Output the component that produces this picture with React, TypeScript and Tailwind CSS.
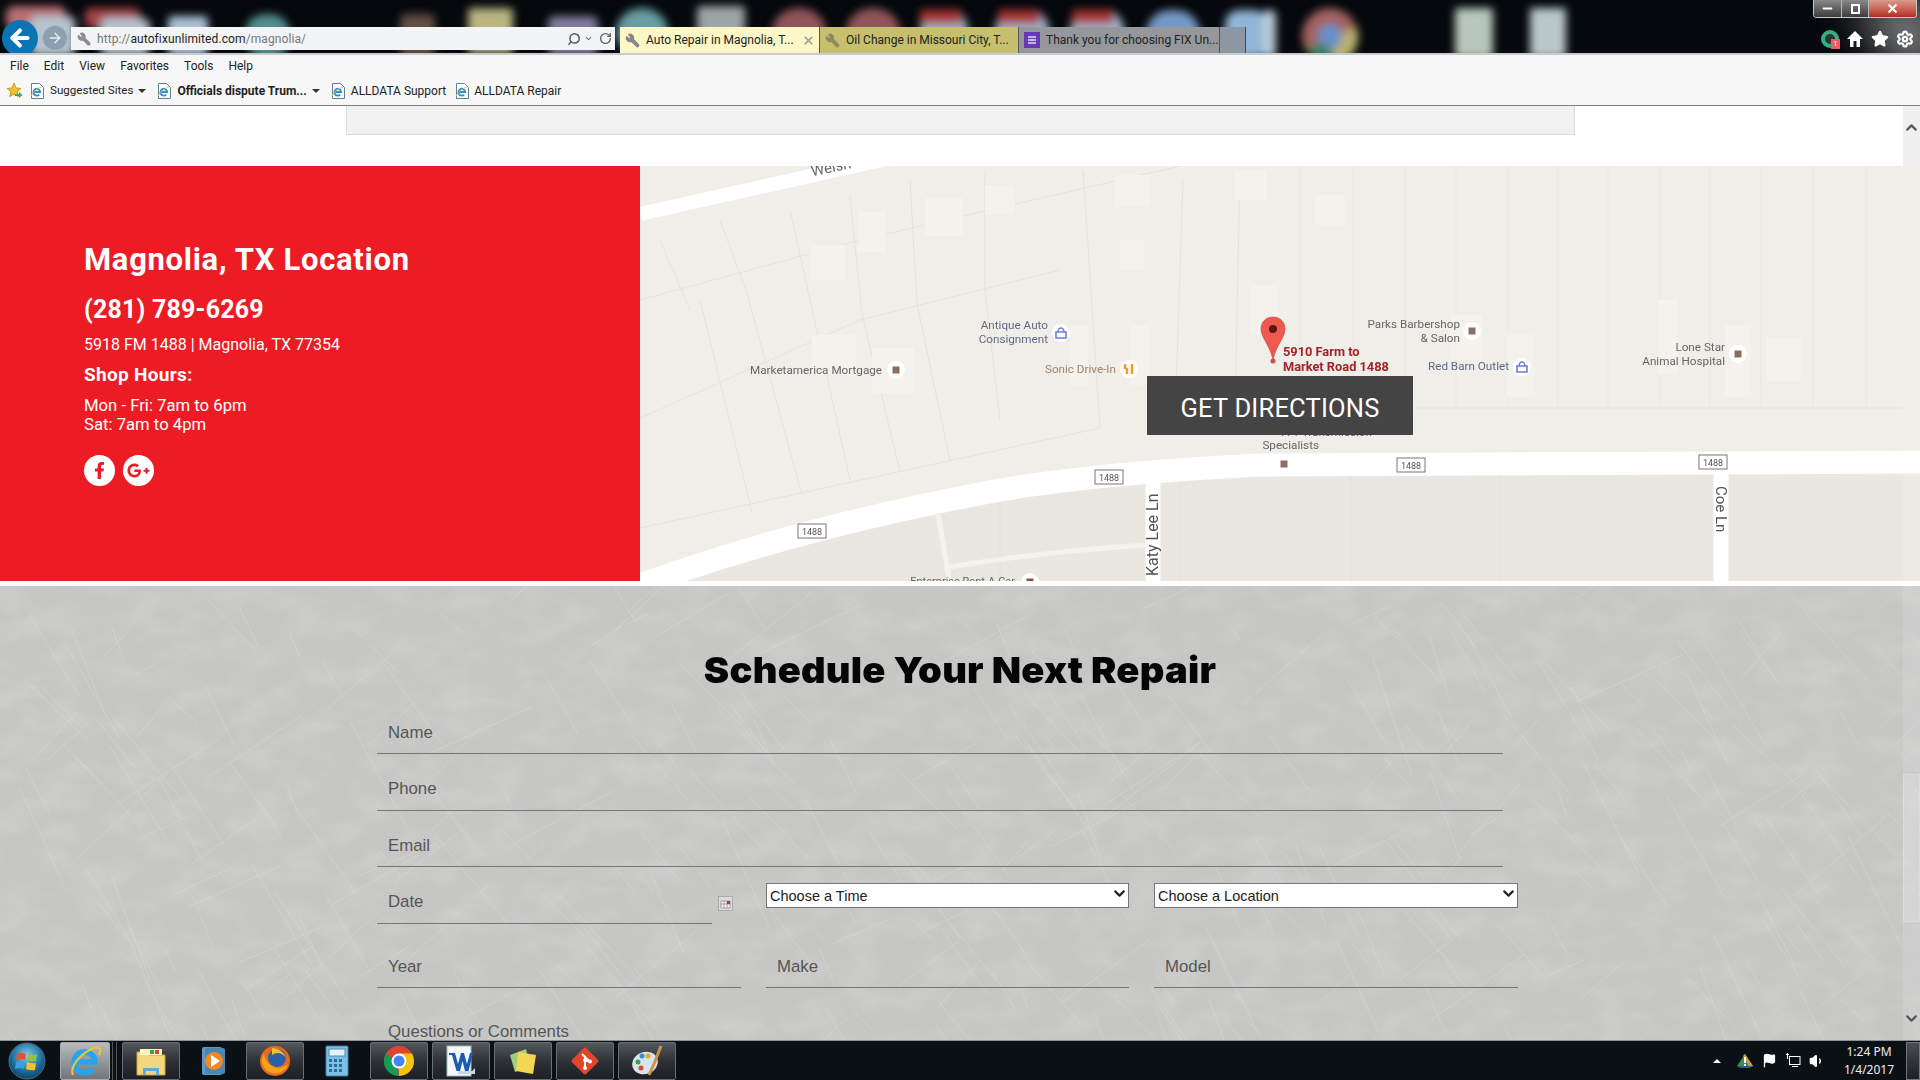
import React from "react";
import { ArrowLeft, ArrowRight, Search, RotateCw, Wrench, X, Home, Star, Settings, Minus, ChevronDown, ChevronUp, Volume1, Flag } from "lucide-react";
import { FaFacebookF, FaGooglePlusG } from "react-icons/fa";

const blurred: [string, number, number, number, number, number][] = [
  ["#c9777c", 6, 6, 60, 24, 8], ["#c7d4e0", 30, 16, 45, 40, 6], ["#b2494c", 85, 8, 55, 20, 6], ["#c4d3e0", 100, 18, 50, 38, 8],
  ["#b9d2e8", 168, 16, 40, 40, 4], ["#5b9a9b", 245, 14, 45, 44, 20], ["#6a5248", 400, 14, 35, 44, 6], ["#c9c38a", 468, 8, 45, 46, 4],
  ["#8a84a8", 548, 16, 50, 40, 6], ["#72aab0", 616, 8, 52, 48, 26], ["#a9b4b4", 697, 6, 48, 48, 4],
  ["#9c5b62", 772, 8, 54, 48, 27], ["#9c5b62", 846, 8, 54, 48, 27], ["#a9c4dc", 920, 10, 48, 48, 20], ["#b83a38", 920, 10, 42, 14, 2],
  ["#a9c4dc", 995, 10, 54, 48, 20], ["#b83a38", 998, 10, 42, 14, 2], ["#a9c4dc", 1070, 10, 54, 48, 20], ["#b83a38", 1072, 10, 42, 14, 2],
  ["#7fa6d6", 1146, 10, 54, 48, 24], ["#9cc4e8", 1225, 10, 42, 48, 14], ["#c8dbe8", 1262, 10, 14, 48, 6],
  ["#c8d8cc", 1455, 8, 38, 50, 3], ["#c9d8d8", 1530, 8, 36, 50, 3],
];

function ChromeDesktop() {
  return (
    <svg className="absolute inset-0 w-full h-full" viewBox="0 0 1920 53" preserveAspectRatio="none">
      <defs>
        <filter id="desk" x="-20%" y="-50%" width="140%" height="200%"><feGaussianBlur stdDeviation="4.5" /></filter>
        <filter id="glow" x="-40%" y="-100%" width="180%" height="300%"><feGaussianBlur stdDeviation="22" /></filter>
      </defs>
      <path d="M1850 0 H1940 V70 H1900Z" fill="#8f8f8f" filter="url(#glow)" opacity="0.9" />
      <g filter="url(#desk)" opacity="0.92">
        {blurred.map(([c, x, y, w, h, r], i) => (
          <rect key={i} x={x} y={y} width={w} height={h} rx={r} fill={c} />
        ))}
        <circle cx="1330" cy="36" r="28" fill="#b06a68" />
        <path d="M1330 36 L1306 50 A28 28 0 0 0 1335 64Z" fill="#3c8a64" />
        <path d="M1330 36 L1335 64 A28 28 0 0 0 1357 28Z" fill="#c9c078" />
        <circle cx="1330" cy="36" r="12" fill="#6f9bd8" />
      </g>
    </svg>
  );
}

function IeSmall() {
  return (
    <svg width="14" height="16" viewBox="0 0 14 16" className="shrink-0 block">
      <path d="M1.5 0.5h8l4 4v11h-12z" fill="#fff" stroke="#5f7f98" />
      <path d="M3.6 9h6.6 A3.4 3.4 0 1 0 9.2 11.6" stroke="#2d8fd0" strokeWidth="1.8" fill="none" />
      <path d="M1 13 C3 9 8 5 12 4" stroke="#e8c040" strokeWidth="1" fill="none" />
    </svg>
  );
}

function Tab({ label, bg, width, icon, children }: { label: string; bg: string; width: string; icon: React.ReactNode; children?: React.ReactNode }) {
  return (
    <div className={`${bg} ${width} h-[26px] flex items-center gap-[6px] pl-[4px] border-r border-[#555]`}>
      {icon}
      <span className="text-[12px] whitespace-nowrap text-[#222]">{label}</span>
      {children}
    </div>
  );
}

function TopChrome() {
  return (
    <header className="relative h-[53px] bg-[#05080c] shrink-0 overflow-hidden">
      <ChromeDesktop />
      <div className="relative flex items-start h-full pt-[20px]">
        <div className="ml-[2px] w-[36px] h-[36px] rounded-full bg-[#0b74b4] flex items-center justify-center">
          <ArrowLeft size={26} strokeWidth={3.6} className="text-white" />
        </div>
        <div className="ml-[4px] mt-[5px] w-[26px] h-[26px] rounded-full border border-[#a9bfd2] bg-[#8da0ae] flex items-center justify-center">
          <ArrowRight size={16} className="text-[#e8eef4]" />
        </div>
        <div className="ml-[3px] mt-[7px] w-[544px] h-[23px] bg-[#f2f4f6] flex items-center pl-[6px] pr-[3px]">
          <Wrench size={14} className="text-[#8c8c8c] -scale-x-100 mr-[6px]" fill="#8c8c8c" />
          <span className="text-[12px] text-[#777] whitespace-nowrap tracking-[0.1px]">http://<span className="text-[#222]">autofixunlimited.com</span>/magnolia/</span>
          <Search size={14} strokeWidth={2.5} className="ml-auto text-[#555] -scale-x-100" />
          <ChevronDown size={9} strokeWidth={3} className="ml-[3px] text-[#777]" />
          <RotateCw size={13} strokeWidth={2.5} className="ml-[6px] text-[#666]" />
        </div>
        <div className="ml-[5px] mt-[7px] flex">
          <Tab label="Auto Repair in Magnolia, T..." bg="bg-[#fdf6c6]" width="w-[200px]" icon={<Wrench size={15} className="text-[#888] -scale-x-100 ml-[1px]" fill="#888" />}>
            <X size={13} strokeWidth={3} className="ml-auto mr-[4px] text-[#9a9a9a]" />
          </Tab>
          <Tab label="Oil Change in Missouri City, T..." bg="bg-[#c5bf6e]" width="w-[199px]" icon={<Wrench size={15} className="text-[#8d8a60] -scale-x-100 ml-[1px]" fill="#8d8a60" />} />
          <Tab label="Thank you for choosing FIX Un..." bg="bg-[#96979a]" width="w-[201px]" icon={
            <span className="w-[16px] h-[16px] bg-[#673ab7] flex flex-col items-center justify-center gap-[1px] ml-[1px] shrink-0">
              <span className="w-[8px] h-[2px] bg-[#c9b8e8]" />
              <span className="w-[8px] h-[2px] bg-[#c9b8e8]" />
              <span className="w-[8px] h-[2px] bg-[#c9b8e8]" />
            </span>
          } />
          <div className="w-[26px] h-[26px] bg-[#8c97a3] border-r border-[#3b4a5a]" />
        </div>
        <div className="ml-auto mt-[10px] mr-[6px] flex items-center gap-[7px]">
          <span className="relative w-[18px] h-[18px] rounded-full border-[4px] border-[#2fb37e] bg-[#333]">
            <span className="absolute -right-[5px] -bottom-[5px] w-[9px] h-[10px] bg-[#ef5a6b] text-white text-[7px] leading-[10px] text-center">1</span>
          </span>
          <svg width="18" height="18" viewBox="0 0 18 18"><path d="M9 1 L17 9 H14 V17 H10.5 V11 H7.5 V17 H4 V9 H1Z" fill="#fff" /></svg>
          <Star size={18} fill="#fff" className="text-white" />
          <Settings size={18} strokeWidth={3} className="text-white" />
        </div>
      </div>
      <div className="absolute top-0 right-[3px] w-[104px] h-[18px] flex rounded-b-[4px] border border-t-0 border-[#c8c8c8] overflow-hidden">
        <div className="w-[28px] bg-gradient-to-b from-[#8a8a8a] to-[#3c3c3c] flex items-center justify-center border-r border-[#bbb]"><Minus size={13} strokeWidth={4} className="text-white" /></div>
        <div className="w-[27px] bg-gradient-to-b from-[#8a8a8a] to-[#3c3c3c] flex items-center justify-center border-r border-[#bbb]"><span className="w-[9px] h-[10px] border-2 border-white" /></div>
        <div className="flex-1 bg-gradient-to-b from-[#d89a90] to-[#b52a1c] flex items-center justify-center"><X size={13} strokeWidth={4} className="text-white" /></div>
      </div>
    </header>
  );
}

function MenuBars() {
  return (
    <div className="h-[53px] shrink-0 bg-[#f7f7f7] border-t-2 border-[#c9ccce] border-b border-b-[#7f7f7f] text-[12px] text-[#222]">
      <nav className="h-[22px] flex items-center pl-[10px] gap-[15px]">
        {["File", "Edit", "View", "Favorites", "Tools", "Help"].map((m) => <span key={m}>{m}</span>)}
      </nav>
      <div className="h-[26px] flex items-center pl-[6px] pt-[1px]">
        <svg width="17" height="17" viewBox="0 0 17 17">
          <path d="M8 1l2 5 5 .4-4 3.2 1.3 5L8 12l-4.3 2.6L5 9.6 1 6.4 6 6z" fill="#f2c230" stroke="#c99a20" />
          <path d="M9 12h4v-2l3.5 3-3.5 3v-2H9z" fill="#4aa84a" />
        </svg>
        <span className="ml-[7px]"><IeSmall /></span>
        <span className="pl-[6px] whitespace-nowrap text-[11.6px]">Suggested Sites</span>
        <span className="ml-[5px] border-x-[4px] border-x-transparent border-t-[4px] border-t-[#333]" />
        <span className="ml-[11px]"><IeSmall /></span>
        <b className="pl-[6px] whitespace-nowrap">Officials dispute Trum...</b>
        <span className="ml-[5px] border-x-[4px] border-x-transparent border-t-[4px] border-t-[#333]" />
        <span className="ml-[11px]"><IeSmall /></span>
        <span className="pl-[6px] whitespace-nowrap">ALLDATA Support</span>
        <span className="ml-[9px]"><IeSmall /></span>
        <span className="pl-[5px] whitespace-nowrap">ALLDATA Repair</span>
      </div>
    </div>
  );
}

function Poi({ cx, cy, color, kind }: { cx: number; cy: number; color: string; kind?: "bag" | "fork" | "square" }) {
  return (
    <g>
      <circle cx={cx} cy={cy} r="9" fill="#fff" />
      {kind === "bag" ? (
        <path d={`M${cx - 5} ${cy - 1}h10v6h-10z M${cx - 3} ${cy - 1}a3 4 0 0 1 6 0`} fill="none" stroke={color} strokeWidth="1.6" />
      ) : kind === "fork" ? (
        <path d={`M${cx - 4} ${cy - 5}v4l2 1v5 M${cx + 3} ${cy - 5}v10`} stroke={color} strokeWidth="2.4" fill="none" />
      ) : (
        <rect x={cx - 3.5} y={cy - 3.5} width="7" height="7" fill={color} />
      )}
    </g>
  );
}

function Shield({ x, y }: { x: number; y: number }) {
  return (
    <g>
      <rect x={x - 14} y={y - 7} width="28" height="14" fill="#fff" stroke="#777" strokeWidth="1" />
      <text x={x} y={y + 3.5} textAnchor="middle" fontSize="9" fill="#555" fontFamily="Roboto, sans-serif">1488</text>
    </g>
  );
}

const cols = [1300, 1353, 1405, 1456, 1508, 1558, 1608, 1660, 1710, 1761, 1813, 1866];

function MapView() {
  return (
    <svg className="absolute inset-0 w-full h-full" viewBox="640 166 1280 415" preserveAspectRatio="none" fontFamily="Roboto, sans-serif">
      <defs><filter id="soft"><feGaussianBlur stdDeviation="0.5" /></filter></defs>
      <g filter="url(#soft)">
        <rect x="640" y="166" width="1280" height="415" fill="#f0eee8" />
        <path d="M640 590 Q 800 533 1000 497 Q 1100 480 1260 472 L1920 468 V581 H640Z" fill="#eae7e0" />
        {[[1000, 581, 1000, 500], [1180, 581, 1180, 480], [1500, 581, 1500, 474], [1351, 581, 1351, 476]].map(([a, b, c, d], i) => (
          <line key={i} x1={a} y1={b} x2={c} y2={d} stroke="#e3e0d8" />
        ))}
        <path d="M640 528 L1100 428 M1100 428 L1083 170 M1300 408 H1905 M640 418 L860 320 L1060 270 M640 300 L860 240 L1180 166" stroke="#e4e2da" fill="none" />
        {[[746, 290, 802, 495], [700, 300, 752, 512], [810, 300, 850, 480], [862, 314, 900, 472], [917, 304, 950, 460], [985, 290, 1000, 420], [660, 240, 690, 310], [720, 220, 746, 290], [790, 210, 810, 300], [850, 195, 862, 314], [910, 180, 917, 304], [985, 170, 985, 290], [1183, 180, 1175, 420], [1240, 170, 1235, 410]].map(([a, b, c, d], i) => (
          <line key={i} x1={a} y1={b} x2={c} y2={d} stroke="#e4e2da" />
        ))}
        {cols.map((x) => <line key={x} x1={x} y1="166" x2={x} y2="410" stroke="#e8e6df" />)}
        {[[810, 245, 35, 35], [858, 212, 28, 40], [925, 198, 38, 38], [985, 185, 30, 30], [1115, 175, 36, 32], [1235, 170, 32, 30], [1250, 285, 28, 50], [812, 335, 44, 40], [872, 348, 42, 45], [1070, 325, 18, 60], [1130, 325, 20, 60], [1450, 315, 32, 45], [1507, 335, 28, 62], [1658, 300, 20, 75], [1725, 325, 26, 72], [1767, 337, 34, 44], [1120, 240, 24, 30], [1315, 195, 30, 30]].map(([x, y, w, h], i) => (
          <rect key={i} x={x} y={y} width={w} height={h} fill="#f3f2ed" />
        ))}
        <path d="M640 585 Q 800 527 1000 490 Q 1100 473 1260 465 L1920 462" stroke="#fff" strokeWidth="23" fill="none" />
        <path d="M640 214 L882 160" stroke="#fff" strokeWidth="14" fill="none" />
        <path d="M1153 478 V585 M1721 470 V585" stroke="#fff" strokeWidth="15" fill="none" />
        <path d="M938 513 L950 585 M950 567 Q 1040 552 1146 545" stroke="#f3f2ee" strokeWidth="5" fill="none" />
        <text x="812" y="171" fontSize="15" fill="#666" transform="rotate(-12 838 173)">Welsh</text>
        <text x="1150" y="574" fontSize="16" fill="#555" transform="rotate(-90 1158 574)" dx="6" dy="0">Katy Lee Ln</text>
        <text x="1716" y="486" fontSize="15" fill="#555" transform="rotate(90 1716 486)">Coe Ln</text>
        <g fontSize="11.7" fill="#5f6a88" textAnchor="end">
          <text x="1048" y="329">Antique Auto</text>
          <text x="1048" y="343">Consignment</text>
          <text x="1509" y="370">Red Barn Outlet</text>
        </g>
        <g fontSize="11.7" fill="#666" textAnchor="end">
          <text x="882" y="374">Marketamerica Mortgage</text>
          <text x="1460" y="328">Parks Barbershop</text>
          <text x="1460" y="342">&amp; Salon</text>
          <text x="1725" y="351">Lone Star</text>
          <text x="1725" y="365">Animal Hospital</text>
          <text x="1372" y="436">A-1 Transmission</text>
          <text x="1319" y="449">Specialists</text>
        </g>
        <text x="1116" y="373" fontSize="11.7" fill="#a8806c" textAnchor="end">Sonic Drive-In</text>
        <text x="1015" y="585" fontSize="11" fill="#666" textAnchor="end">Enterprise Rent-A-Car</text>
        <Poi cx={1061} cy={333} color="#6c7fd8" kind="bag" />
        <Poi cx={896} cy={370} color="#8d6e63" />
        <Poi cx={1129} cy={369} color="#f29a2e" kind="fork" />
        <Poi cx={1472} cy={331} color="#8d6e63" />
        <Poi cx={1522} cy={367} color="#6c7fd8" kind="bag" />
        <Poi cx={1738} cy={354} color="#8d6e63" />
        <Poi cx={1284} cy={464} color="#8d6e63" />
        <Poi cx={1030} cy={582} color="#8d4e43" />
        <Shield x={1109} y={477} />
        <Shield x={812} y={531} />
        <Shield x={1411} y={465} />
        <Shield x={1713} y={462} />
        <path d="M1273 317 C1265 317 1261 323 1261 329 C1261 338 1270 345 1273 360 C1276 345 1285 338 1285 329 C1285 323 1281 317 1273 317Z" fill="#ee5a4f" stroke="#c9403a" strokeWidth="0.6" />
        <circle cx="1273" cy="329" r="4" fill="#5e1512" />
        <circle cx="1273" cy="361" r="2.5" fill="#d8473f" />
        <g fontSize="12.8" fontWeight="700" fill="#a3232a">
          <text x="1283" y="356">5910 Farm to</text>
          <text x="1283" y="371">Market Road 1488</text>
        </g>
      </g>
    </svg>
  );
}

function LocationPanel() {
  return (
    <aside className="w-[640px] bg-[#ed1c24] text-white pl-[84px] pt-[73px] font-['Roboto',sans-serif]">
      <h2 className="text-[31px] leading-[42px] font-bold tracking-[0.7px]">Magnolia, TX Location</h2>
      <p className="mt-[14px] text-[25px] leading-[30px] font-bold tracking-[0.2px]">(281) 789-6269</p>
      <p className="mt-[10px] text-[16px] leading-[20px]">5918 FM 1488 | Magnolia, TX 77354</p>
      <p className="mt-[9px] text-[19px] leading-[22px] font-bold tracking-[0.3px]">Shop Hours:</p>
      <p className="mt-[10px] text-[16.7px] leading-[19px]">Mon - Fri: 7am to 6pm<br />Sat: 7am to 4pm</p>
      <div className="mt-[21px] flex gap-[8px]">
        <span className="w-[31px] h-[31px] rounded-full bg-white flex items-center justify-center text-[#ed1c24]"><FaFacebookF size={17} /></span>
        <span className="w-[31px] h-[31px] rounded-full bg-white flex items-center justify-center text-[#ed1c24]"><FaGooglePlusG size={23} /></span>
      </div>
    </aside>
  );
}

const rng = (i: number) => {
  const v = Math.sin(i * 127.1 + 311.7) * 43758.5453;
  return v - Math.floor(v);
};
const scratchPath = Array.from({ length: 320 }, (_, i) => {
  const x = rng(i) * 1920;
  const y = rng(i + 1000) * 454;
  const len = 20 + rng(i + 2000) * 110;
  const a = (i % 4 === 0 ? -0.9 : 0.75) + rng(i + 3000) * 0.5;
  return `M${x.toFixed(0)} ${y.toFixed(0)}l${(Math.cos(a) * len).toFixed(0)} ${(Math.sin(a) * len).toFixed(0)}`;
}).join("");

function Concrete() {
  return (
    <svg className="absolute inset-0 w-full h-full" xmlns="http://www.w3.org/2000/svg">
      <defs>
        <filter id="fine" x="0" y="0" width="100%" height="100%">
          <feTurbulence type="fractalNoise" baseFrequency="0.6 0.8" numOctaves="2" seed="4" />
          <feColorMatrix values="0 0 0 0 0.55  0 0 0 0 0.55  0 0 0 0 0.55  1.2 0 0 0 -0.48" />
        </filter>
        <filter id="fine2" x="0" y="0" width="100%" height="100%">
          <feTurbulence type="fractalNoise" baseFrequency="0.025 0.04" numOctaves="4" seed="11" />
          <feColorMatrix values="0 0 0 0 1  0 0 0 0 1  0 0 0 0 1  1.4 0 0 0 -0.56" />
        </filter>
        <filter id="sc"><feGaussianBlur stdDeviation="0.6" /></filter>
      </defs>
      <rect width="100%" height="100%" filter="url(#fine2)" opacity="0.2" />
      <rect width="100%" height="100%" filter="url(#fine)" opacity="0.22" />
      <path d={scratchPath} stroke="#ececec" strokeWidth="1" opacity="0.24" fill="none" filter="url(#sc)" />
    </svg>
  );
}

function Field({ label, className = "" }: { label: string; className?: string }) {
  return (
    <div className={`h-[34px] pl-[11px] border-b border-[#757575] text-[16.8px] leading-[24px] text-[#555] ${className}`}>{label}</div>
  );
}

function Choice({ label }: { label: string }) {
  return (
    <div className="relative -mt-[7px] h-[25px]">
      <select className="w-full h-full appearance-none bg-white border border-[#767676] pl-[3px] pt-[2px] text-[14.5px] text-[#222] outline-none rounded-none" defaultValue={label}>
        <option>{label}</option>
      </select>
      <ChevronDown size={17} strokeWidth={3} className="absolute right-[1px] top-[2px] text-[#222] pointer-events-none" />
    </div>
  );
}

function ScheduleForm() {
  return (
    <section className="relative flex-1 bg-[#c6c7c5] overflow-hidden pt-[64px]">
      <Concrete />
      <div className="relative">
        <h1 className="text-center text-[#050505] text-[36px] leading-[40px] font-black font-['Inter',sans-serif] tracking-[0.2px] scale-x-[1.06]">Schedule Your Next Repair</h1>
        <form className="ml-[377px] w-[1141px] mt-[30px] font-['Liberation_Sans',sans-serif]">
          <Field label="Name" className="w-[1126px] pt-[1px]" />
          <Field label="Phone" className="w-[1126px] mt-[23px]" />
          <Field label="Email" className="w-[1126px] mt-[22px] pt-[1px]" />
          <div className="mt-[23px] grid grid-cols-[364px_363px_364px] gap-x-[25px] gap-y-[30px]">
            <div className="flex items-start">
              <Field label="Date" className="w-[335px]" />
              <svg width="15" height="15" viewBox="0 0 15 15" className="ml-[6px] mt-[6px]">
                <rect x="0.5" y="0.5" width="14" height="14" fill="#ddd" stroke="#aaa" />
                <path d="M3 5h9v7H3z" fill="#fff" stroke="#999" />
                <path d="M3 8h9M6 5v7M9 5v7" stroke="#999" />
                <rect x="9" y="5" width="3" height="3" fill="#b03a3a" />
              </svg>
            </div>
            <Choice label="Choose a Time" />
            <Choice label="Choose a Location" />
            <Field label="Year" className="pt-[1px]" />
            <Field label="Make" className="pt-[1px]" />
            <Field label="Model" className="pt-[1px]" />
          </div>
          <div className="mt-[32px] pl-[11px] text-[16.8px] leading-[24px] text-[#555]">Questions or Comments</div>
        </form>
      </div>
    </section>
  );
}

function Scrollbar() {
  return (
    <div className="absolute top-0 right-0 bottom-0 w-[17px] bg-[#ffffff]/12 flex flex-col items-center">
      <div className="w-full h-[60px] bg-[#f0f0f0] flex justify-center pt-[13px]"><ChevronUp size={17} strokeWidth={3} className="text-[#555]" /></div>
      <div className="w-full mt-[608px] h-[148px] bg-[#ffffff]/15 border border-[#ffffff]/20" />
      <ChevronDown size={17} strokeWidth={3} className="mt-[88px] text-[#555]" />
    </div>
  );
}

function TaskBtn({ children }: { children: React.ReactNode }) {
  return (
    <div className="w-[58px] h-[38px] flex items-center justify-center rounded-[2px] border border-[#6a6e72] bg-gradient-to-b from-[#54585c] via-[#2e3236] to-[#1c2024]">
      {children}
    </div>
  );
}

function TaskPlain({ children }: { children: React.ReactNode }) {
  return <div className="w-[58px] h-[38px] flex items-center justify-center">{children}</div>;
}

function Taskbar() {
  return (
    <footer className="relative h-[40px] shrink-0 bg-[#0b1015] border-t border-[#8a9096] flex items-center font-['Noto_Sans',sans-serif]">
      <svg width="38" height="38" viewBox="0 0 38 38" className="ml-[8px]">
        <defs>
          <radialGradient id="orb" cx="0.5" cy="0.35" r="0.7"><stop offset="0" stopColor="#8ccbe8" /><stop offset="0.6" stopColor="#1a6ea0" /><stop offset="1" stopColor="#0a3a5c" /></radialGradient>
        </defs>
        <circle cx="19" cy="19" r="18" fill="url(#orb)" stroke="#4a6a80" />
        <path d="M9 12 Q13 10 18 12 L17 18 Q13 16 8 18Z" fill="#e8502a" />
        <path d="M20 12 Q25 14 29 12 L28 19 Q24 20 19 18Z" fill="#8cc63f" />
        <path d="M8 20 Q13 18 17 20 L16 27 Q12 25 7 27Z" fill="#3a9fe0" />
        <path d="M19 20 Q24 22 28 21 L27 28 Q23 29 18 27Z" fill="#f8c021" />
      </svg>
      <div className="ml-[14px]">
        <div className="w-[50px] h-[38px] flex items-center justify-center rounded-[2px] border border-[#aaa] bg-gradient-to-b from-[#b8bcbe] to-[#70767a]">
          <svg width="36" height="36" viewBox="0 0 36 36">
            <path d="M9 19 H28 A10.5 10.5 0 1 0 25.5 26" stroke="#27a4ea" strokeWidth="5.5" fill="none" />
            <path d="M6 32 C2 24 14 10 27 5 C33 3 35 6 32 12" stroke="#eec43a" strokeWidth="2.2" fill="none" />
          </svg>
        </div>
      </div>
      <span className="ml-[2px] w-[5px] h-[38px] border-x border-[#555]" />
      <div className="ml-[5px] flex gap-[4px]">
        <TaskBtn>
          <svg width="34" height="32" viewBox="0 0 34 32">
            <path d="M3 7h10l2 3h16v20H3z" fill="#f4d77c" stroke="#c9a640" />
            <path d="M6 4h22v6H6z" fill="#fff3c4" />
            <rect x="16" y="5" width="4" height="4" fill="#3aa04a" /><rect x="21" y="5" width="4" height="4" fill="#d04a3a" />
            <path d="M9 23h16v7h-3v-4H12v4H9z" fill="#5fa8d8" />
          </svg>
        </TaskBtn>
        <TaskPlain>
          <svg width="26" height="30" viewBox="0 0 26 30">
            <rect x="2" y="1" width="20" height="28" rx="2" fill="#5f98c4" />
            <rect x="5" y="2" width="20" height="26" rx="2" fill="#4a86b4" />
            <circle cx="14" cy="15" r="9" fill="#f08a24" />
            <path d="M11 9l9 6-9 6z" fill="#fff" />
          </svg>
        </TaskPlain>
        <TaskBtn>
          <svg width="34" height="34" viewBox="0 0 34 34">
            <circle cx="17" cy="17" r="15" fill="#e66a1c" />
            <circle cx="19" cy="14" r="9" fill="#2d5fa8" />
            <path d="M6 10 C8 22 20 28 30 20 C28 30 12 34 5 22 C3 18 4 13 6 10Z" fill="#f7a11f" />
            <path d="M14 4 C20 4 26 8 28 14 C24 8 18 8 14 11Z" fill="#f0c12c" />
          </svg>
        </TaskBtn>
        <TaskPlain>
          <svg width="24" height="32" viewBox="0 0 24 32">
            <rect x="1" y="1" width="22" height="30" rx="1" fill="#7cc0e8" stroke="#3f7ea8" />
            <rect x="4" y="4" width="16" height="7" fill="#e4f2fa" stroke="#5a8aa8" />
            <g fill="#2f6a94">
              <rect x="4" y="14" width="3" height="3" /><rect x="9" y="14" width="3" height="3" /><rect x="14" y="14" width="3" height="3" />
              <rect x="4" y="19" width="3" height="3" /><rect x="9" y="19" width="3" height="3" /><rect x="14" y="19" width="3" height="3" />
              <rect x="4" y="24" width="3" height="3" /><rect x="9" y="24" width="3" height="3" /><rect x="14" y="24" width="3" height="3" />
            </g>
          </svg>
        </TaskPlain>
        <TaskBtn>
          <svg width="32" height="32" viewBox="-16 -16 32 32">
            <circle r="15" fill="#db4437" />
            <path d="M-13 7.5 A15 15 0 0 1 -13 -7.5 L-3 0 L0 15 A15 15 0 0 1 -13 7.5Z" fill="#0f9d58" />
            <path d="M0 15 A15 15 0 0 0 15 0 A15 15 0 0 0 13 -7.5 H0Z" fill="#f4c20d" />
            <circle r="7.5" fill="#fff" /><circle r="5.5" fill="#4285f4" />
          </svg>
        </TaskBtn>
        <TaskBtn>
          <svg width="34" height="34" viewBox="0 0 34 34">
            <rect x="3" y="2" width="24" height="30" fill="#f4f8fc" stroke="#9bb" />
            <path d="M5 9 H11 L14 20 L17 9 H20 L23 20 L26 9 H29 L24.5 27 H21 L18.5 17 L16 27 H12.5 L8 11 H5Z" fill="#1c5bb0" />
            <path d="M14 27h14l3-3v6h-17z" fill="#c8d8e8" />
          </svg>
        </TaskBtn>
        <TaskBtn>
          <svg width="34" height="30" viewBox="0 0 34 30">
            <path d="M4 9 L20 3 L24 20 L9 26Z" fill="#9ccf7c" />
            <path d="M12 6 L30 9 L27 28 L10 25Z" fill="#f3d653" />
          </svg>
        </TaskBtn>
        <TaskBtn>
          <svg width="30" height="30" viewBox="0 0 30 30">
            <rect x="5" y="5" width="20" height="20" rx="2" transform="rotate(45 15 15)" fill="#e2472a" />
            <path d="M12 8l7 7M15 15v7M15 15l4 0" stroke="#fff" strokeWidth="2" fill="none" />
            <circle cx="15" cy="22" r="2" fill="#fff" /><circle cx="15" cy="14" r="2" fill="#fff" /><circle cx="20" cy="15.5" r="2" fill="#fff" />
          </svg>
        </TaskBtn>
        <TaskBtn>
          <svg width="34" height="34" viewBox="0 0 34 34">
            <ellipse cx="15" cy="19" rx="13" ry="11" fill="#d8e4ee" transform="rotate(-20 15 19)" />
            <circle cx="8" cy="18" r="2.5" fill="#3aa04a" /><circle cx="12" cy="12" r="2.5" fill="#3a8fd8" /><circle cx="18" cy="12" r="2.5" fill="#e0b020" /><circle cx="11" cy="24" r="2.5" fill="#d04a3a" />
            <path d="M31 2 L24 20 L19 31" stroke="#c9924a" strokeWidth="3" fill="none" />
          </svg>
        </TaskBtn>
      </div>
      <div className="ml-auto flex items-center text-white">
        <span className="border-x-[4px] border-x-transparent border-b-[4px] border-b-white" />
        <svg width="16" height="14" viewBox="0 0 16 14" className="ml-[16px]">
          <path d="M8 0 L16 12 L12 14 H4 L0 12Z" fill="#3f8a5a" />
          <path d="M0 12 L4 14 H12 L16 12Z" fill="#2a5aa0" />
          <path d="M8 0 L16 12 H12 L6 2Z" fill="#c9a030" />
          <rect x="7" y="3" width="2" height="6" fill="#fff" /><rect x="7" y="10" width="2" height="2" fill="#fff" />
        </svg>
        <Flag size={15} fill="#fff" className="ml-[9px]" />
        <svg width="15" height="15" viewBox="0 0 15 15" className="ml-[9px]">
          <rect x="3.5" y="3.5" width="10.5" height="8" fill="none" stroke="#fff" />
          <path d="M6 13.5h6M1.5 0v6M0 1.5h3" stroke="#fff" strokeWidth="1.2" fill="none" />
        </svg>
        <Volume1 size={16} fill="#fff" className="ml-[8px]" />
        <div className="ml-[7px] w-[74px] text-center text-[12px] leading-[18px] text-[#eee]">
          <div>1:24 PM</div>
          <div>1/4/2017</div>
        </div>
        <div className="ml-0 w-[14px] h-[38px] border border-[#777] bg-gradient-to-b from-[#4a4e52] to-[#1c2024]" />
      </div>
    </footer>
  );
}

export default function App() {
  return (
    <div className="w-[1920px] h-[1080px] flex flex-col overflow-hidden bg-white font-['Roboto',sans-serif]">
      <TopChrome />
      <MenuBars />
      <main className="relative flex-1 flex flex-col bg-white overflow-hidden">
        <div className="h-[60px] shrink-0">
          <div className="ml-[346px] w-[1229px] h-[29px] bg-[#f1f1f1] border-l border-r border-b border-[#dcdcdc]" />
        </div>
        <div className="flex h-[415px] shrink-0">
          <LocationPanel />
          <div className="relative flex-1">
            <MapView />
            <a className="absolute left-[507px] top-[210px] w-[266px] h-[59px] pt-[6px] bg-[#444] text-white text-[25.5px] flex items-center justify-center tracking-[0.2px]">GET DIRECTIONS</a>
          </div>
        </div>
        <div className="h-[5px] shrink-0" />
        <ScheduleForm />
        <Scrollbar />
      </main>
      <Taskbar />
    </div>
  );
}
